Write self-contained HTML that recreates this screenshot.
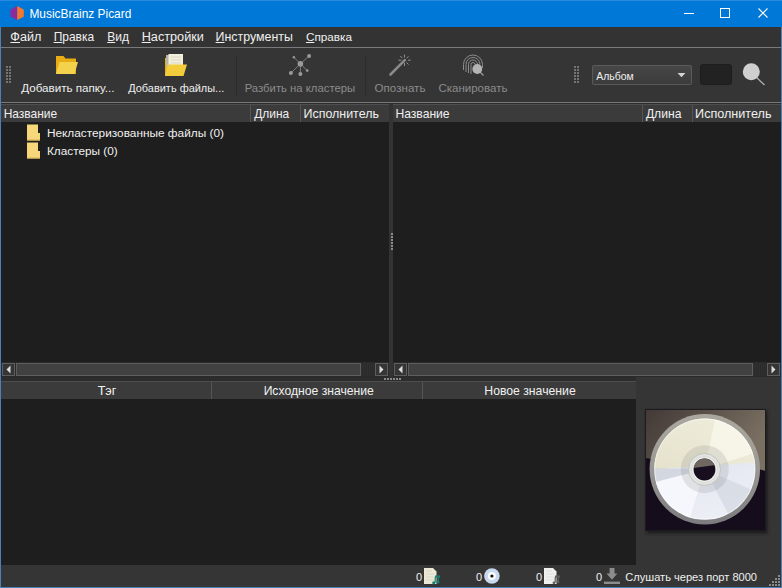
<!DOCTYPE html>
<html><head><meta charset="utf-8">
<style>
*{margin:0;padding:0;box-sizing:border-box}
html,body{width:782px;height:588px;overflow:hidden;background:#0078d7;font-family:"Liberation Sans",sans-serif;font-size:11.5px;color:#f0f0f0}
div,span,svg{position:absolute}
span{white-space:pre;line-height:1}
.u{position:static;text-decoration:underline}
.dis{color:#8c8c8c}
.hd{background:#3b3b3b}
.hl{height:1px;background:#4e4e4e}
.cs{width:1px;background:#555}
.pn{background:#1e1e1e}
.btn{width:13px;height:13px;border:1px solid #5e5e5e;background:#353535}
.hdl{height:13px;border:1px solid #5e5e5e;background:#414141}
</style></head><body>

<div style="left:0;top:0;width:782px;height:27px;background:#0078d7"></div>
<div style="left:0;top:0;width:782px;height:1px;background:#2a8ade"></div>
<div style="left:0;top:27px;width:1px;height:561px;background:#4a82b8"></div>
<div style="left:781px;top:27px;width:1px;height:561px;background:#4a82b8"></div>
<div style="left:0;top:587px;width:782px;height:1px;background:#4a82b8"></div>
<svg style="left:10px;top:5px" width="15" height="16" viewBox="0 0 15 16">
<path d="M7.2 1 L1 4.2 Q0.4 4.5 0.4 5.2 V11 Q0.4 11.6 1 11.9 L7.2 15 Z" fill="#8a2c9c"/><path d="M7.2 1 L13.2 4.2 Q13.8 4.5 13.8 5.2 V11 Q13.8 11.6 13.2 11.9 L7.2 15 Z" fill="#f27830"/></svg>
<span style="left:29.45px;top:9px;font-size:11.91px;color:#fff;">MusicBrainz Picard</span>
<div style="left:684px;top:13px;width:10px;height:1px;background:#fff"></div>
<div style="left:720px;top:8px;width:10px;height:10px;border:1px solid #fff"></div>
<svg style="left:758px;top:8px" width="10" height="10" viewBox="0 0 10 10"><path d="M0.5 0.5 L9.5 9.5 M9.5 0.5 L0.5 9.5" stroke="#fff" stroke-width="1.1"/></svg>
<div style="left:1px;top:27px;width:780px;height:20px;background:#333"></div>
<span style="left:10.37px;top:31px;font-size:12.62px"><span class="u">Ф</span>айл</span>
<span style="left:53.64px;top:31px;font-size:11.99px"><span class="u">П</span>равка</span>
<span style="left:107.24px;top:31px;font-size:12.01px"><span class="u">В</span>ид</span>
<span style="left:141.69px;top:31px;font-size:12.68px"><span class="u">Н</span>астройки</span>
<span style="left:215.61px;top:31px;font-size:12.39px"><span class="u">И</span>нструменты</span>
<span style="left:305.91px;top:31px;font-size:11.74px"><span class="u">С</span>правка</span>
<div style="left:1px;top:47px;width:780px;height:1px;background:#7a7a7a"></div>
<div style="left:1px;top:48px;width:780px;height:54px;background:#353535"></div>
<svg style="left:6px;top:66px" width="6" height="18" viewBox="0 0 6 18" fill="#747474"><rect x="0" y="0" width="2" height="2"/><rect x="3" y="0" width="2" height="2"/><rect x="0" y="3" width="2" height="2"/><rect x="3" y="3" width="2" height="2"/><rect x="0" y="6" width="2" height="2"/><rect x="3" y="6" width="2" height="2"/><rect x="0" y="9" width="2" height="2"/><rect x="3" y="9" width="2" height="2"/><rect x="0" y="12" width="2" height="2"/><rect x="3" y="12" width="2" height="2"/><rect x="0" y="15" width="2" height="2"/><rect x="3" y="15" width="2" height="2"/></svg>
<svg style="left:55px;top:55px" width="24" height="20" viewBox="0 0 24 20">
<path d="M1 1 H8.5 L10.5 3.5 H21 V19 H1 Z" fill="#e9ad14"/><path d="M4.5 7 H23 L19.5 19 H1 Z" fill="#f5d24c"/></svg>
<span style="left:21.2px;top:82px;font-size:11.63px;">Добавить папку...</span>
<svg style="left:164px;top:53px" width="24" height="24" viewBox="0 0 24 24">
<path d="M1 5 H4 V23 H1 Z" fill="#e6b020"/><path d="M2 2 H5 V14 H2 Z" fill="#b8b3a0"/>
<path d="M4.5 1 H19 V14 H4.5 Z" fill="#f2eedc"/><path d="M7 4 H17 M7 7 H17 M7 10 H17" stroke="#d8d2bc" stroke-width="0.8"/>
<path d="M3.5 11.5 H23 L19.5 23 H1 Z" fill="#f2cc3a"/></svg>
<span style="left:128.2px;top:83px;font-size:10.96px;">Добавить файлы...</span>
<div style="left:236px;top:56px;width:1px;height:40px;background:#2c2c2c"></div>
<svg style="left:287px;top:51px" width="26" height="26" viewBox="287 51 26 26">
<g stroke="#858585" stroke-width="0.9"><line x1="300.4" y1="63.8" x2="293.9" y2="57.3"/><line x1="300.4" y1="63.8" x2="309.1" y2="55.9"/>
<line x1="300.4" y1="63.8" x2="290.9" y2="73"/><line x1="300.4" y1="63.8" x2="300.4" y2="73.9"/><line x1="300.4" y1="63.8" x2="307.2" y2="70.6"/></g>
<g fill="#9a9a9a"><circle cx="300.4" cy="63.8" r="2.8"/><circle cx="293.9" cy="57.3" r="1.2"/><circle cx="309.1" cy="55.9" r="2"/>
<circle cx="290.9" cy="73" r="2"/><circle cx="300.4" cy="73.9" r="2"/><circle cx="307.2" cy="70.6" r="1.3"/></g></svg>
<span style="left:244.69px;top:83px;font-size:11.32px;color:#8c8c8c;">Разбить на кластеры</span>
<div style="left:365px;top:56px;width:1px;height:40px;background:#2c2c2c"></div>
<svg style="left:385px;top:48px" width="30" height="30" viewBox="385 48 30 30">
<line x1="390.5" y1="74.5" x2="404.8" y2="60.2" stroke="#8a8a8a" stroke-width="2.6" stroke-linecap="round"/>
<g stroke="#8f8f8f" stroke-width="1"><line x1="404.5" y1="54.5" x2="404.5" y2="57.5"/><line x1="404.5" y1="63" x2="404.5" y2="66"/>
<line x1="398.3" y1="60.2" x2="401.3" y2="60.2"/><line x1="407.9" y1="60.2" x2="410.8" y2="60.2"/>
<line x1="400.3" y1="56" x2="402.3" y2="58"/><line x1="406.5" y1="58.3" x2="408.5" y2="56.3"/><line x1="406.5" y1="62.5" x2="408.5" y2="64.5"/></g></svg>
<span style="left:374.54px;top:82px;font-size:11.61px;color:#8c8c8c;">Опознать</span>
<svg style="left:460px;top:52px" width="28" height="26" viewBox="460 52 28 26">
<g fill="none" stroke="#8c8c8c" stroke-width="1"><path d="M463.5 70 V64.5 A9.5 9.5 0 0 1 482.5 64.5 V68"/>
<path d="M466 72 V64.5 A7 7 0 0 1 480 64.5"/><path d="M468.5 73 V64.5 A4.5 4.5 0 0 1 477.5 64.5"/><path d="M471 74 V64.5 A2 2 0 0 1 475 64.5"/></g>
<line x1="478" y1="70" x2="483.5" y2="75.5" stroke="#9a9a9a" stroke-width="1.3"/><circle cx="477.3" cy="69" r="4.9" fill="#b4b4b4"/></svg>
<span style="left:438.42px;top:83px;font-size:11.52px;color:#8c8c8c;">Сканировать</span>
<svg style="left:574px;top:66px" width="6" height="18" viewBox="0 0 6 18" fill="#747474"><rect x="0" y="0" width="2" height="2"/><rect x="3" y="0" width="2" height="2"/><rect x="0" y="3" width="2" height="2"/><rect x="3" y="3" width="2" height="2"/><rect x="0" y="6" width="2" height="2"/><rect x="3" y="6" width="2" height="2"/><rect x="0" y="9" width="2" height="2"/><rect x="3" y="9" width="2" height="2"/><rect x="0" y="12" width="2" height="2"/><rect x="3" y="12" width="2" height="2"/><rect x="0" y="15" width="2" height="2"/><rect x="3" y="15" width="2" height="2"/></svg>
<div style="left:592px;top:65px;width:100px;height:20px;border:1px solid #5a5a5a;border-radius:2px;background:linear-gradient(#474747,#3b3b3b)"></div>
<span style="left:596.2px;top:72px;font-size:10.45px;">Альбом</span>
<svg style="left:677px;top:72px" width="9" height="6" viewBox="0 0 9 6"><path d="M0.6 1 H8.4 L4.5 5.2 Z" fill="#d4d4d4"/></svg>
<div style="left:700px;top:64px;width:32px;height:21px;border-radius:3px;background:#222;border:1px solid #1d1d1d"></div>
<svg style="left:740px;top:60px" width="28" height="28" viewBox="740 60 28 28">
<line x1="755" y1="76" x2="764.5" y2="85" stroke="#b0b0b0" stroke-width="1.3"/><circle cx="751.3" cy="71.7" r="8.5" fill="#cfcfcf"/></svg>
<div style="left:1px;top:102px;width:780px;height:1px;background:#787878"></div>
<div style="left:1px;top:103px;width:780px;height:462px;background:#2c2c2c"></div>
<div class="pn" style="left:1px;top:104px;width:388px;height:258px"></div>
<div class="hd" style="left:1px;top:104px;width:388px;height:18px"></div>
<div class="hl" style="left:1px;top:104px;width:388px"></div>
<div class="cs" style="left:250px;top:105px;height:17px"></div>
<div class="cs" style="left:300px;top:105px;height:17px"></div>
<div style="left:1px;top:362px;width:388px;height:15px;background:#2a2a2a"></div>
<div class="btn" style="left:2px;top:363px"></div>
<svg style="left:6px;top:365px" width="5" height="9" viewBox="0 0 5 9"><path d="M4.5 0.5 V8.5 L0.5 4.5 Z" fill="#dcdcdc"/></svg>
<div style="left:361px;top:363px;width:13px;height:13px;background:repeating-linear-gradient(90deg,#303030 0 1px,#2b2b2b 1px 2px)"></div>
<div class="btn" style="left:375px;top:363px"></div>
<svg style="left:379px;top:365px" width="5" height="9" viewBox="0 0 5 9"><path d="M0.5 0.5 V8.5 L4.5 4.5 Z" fill="#dcdcdc"/></svg>
<div class="hdl" style="left:16px;top:363px;width:345px"></div>
<div class="pn" style="left:393px;top:104px;width:388px;height:258px"></div>
<div class="hd" style="left:393px;top:104px;width:388px;height:18px"></div>
<div class="hl" style="left:393px;top:104px;width:388px"></div>
<div class="cs" style="left:642px;top:105px;height:17px"></div>
<div class="cs" style="left:692px;top:105px;height:17px"></div>
<div style="left:393px;top:362px;width:388px;height:15px;background:#2a2a2a"></div>
<div class="btn" style="left:394px;top:363px"></div>
<svg style="left:398px;top:365px" width="5" height="9" viewBox="0 0 5 9"><path d="M4.5 0.5 V8.5 L0.5 4.5 Z" fill="#dcdcdc"/></svg>
<div style="left:753px;top:363px;width:13px;height:13px;background:repeating-linear-gradient(90deg,#303030 0 1px,#2b2b2b 1px 2px)"></div>
<div class="btn" style="left:767px;top:363px"></div>
<svg style="left:771px;top:365px" width="5" height="9" viewBox="0 0 5 9"><path d="M0.5 0.5 V8.5 L4.5 4.5 Z" fill="#dcdcdc"/></svg>
<div class="hdl" style="left:408px;top:363px;width:345px"></div>
<span style="left:3.64px;top:108px;font-size:11.99px;">Название</span>
<span style="left:254.2px;top:109px;font-size:11.94px;">Длина</span>
<span style="left:303.51px;top:108px;font-size:12.44px;">Исполнитель</span>
<span style="left:395.43px;top:108px;font-size:12.13px;">Название</span>
<span style="left:645.9px;top:108px;font-size:12.14px;">Длина</span>
<span style="left:695.09px;top:108px;font-size:12.61px;">Исполнитель</span>
<svg style="left:26px;top:124px" width="15" height="17" viewBox="0 0 15 17">
<path d="M1 0.5 H12 V9 H14 V16.5 H1 Z" fill="#f6d77a"/><path d="M1 15.5 H14 V16.5 H1 Z" fill="#d8b050"/></svg>
<svg style="left:26px;top:142px" width="15" height="17" viewBox="0 0 15 17">
<path d="M1 0.5 H12 V9 H14 V16.5 H1 Z" fill="#f6d77a"/><path d="M1 15.5 H14 V16.5 H1 Z" fill="#d8b050"/></svg>
<span style="left:46.95px;top:128px;font-size:11.84px;">Некластеризованные файлы (0)</span>
<span style="left:46.96px;top:146px;font-size:11.81px;">Кластеры (0)</span>
<div style="left:389px;top:104px;width:4px;height:273px;background:#333"></div>
<svg style="left:391px;top:233px" width="2" height="18" viewBox="0 0 2 18" fill="#8a8a8a"><rect x="0" y="0" width="2" height="2"/><rect x="0" y="3" width="2" height="2"/><rect x="0" y="6" width="2" height="2"/><rect x="0" y="9" width="2" height="2"/><rect x="0" y="12" width="2" height="2"/><rect x="0" y="15" width="2" height="2"/></svg>
<svg style="left:384px;top:378px" width="18" height="2" viewBox="0 0 18 2" fill="#8a8a8a"><rect x="0" y="0" width="2" height="2"/><rect x="3" y="0" width="2" height="2"/><rect x="6" y="0" width="2" height="2"/><rect x="9" y="0" width="2" height="2"/><rect x="12" y="0" width="2" height="2"/><rect x="15" y="0" width="2" height="2"/></svg>
<div class="pn" style="left:1px;top:381px;width:635px;height:184px"></div>
<div class="hd" style="left:1px;top:381px;width:635px;height:18px"></div>
<div class="hl" style="left:1px;top:381px;width:635px"></div>
<div class="cs" style="left:211px;top:382px;height:17px"></div>
<div class="cs" style="left:422px;top:382px;height:17px"></div>
<span style="left:97.65px;top:385px;font-size:12.63px;">Тэг</span>
<span style="left:263.63px;top:385px;font-size:12.18px;">Исходное значение</span>
<span style="left:484.32px;top:385px;font-size:12.23px;">Новое значение</span>
<div style="left:636px;top:377px;width:145px;height:188px;background:#353535"></div>
<svg style="left:636px;top:400px" width="145" height="145" viewBox="636 400 145 145">
<defs>
<filter id="sh" x="-10%" y="-10%" width="130%" height="130%"><feGaussianBlur stdDeviation="1.6"/></filter>
<linearGradient id="bgb" x1="0" y1="0" x2="1" y2="0.4"><stop offset="0" stop-color="#423836"/><stop offset="1" stop-color="#7a7062"/></linearGradient>
<linearGradient id="ring" x1="0" y1="0" x2="0" y2="1"><stop offset="0" stop-color="#aaa79e"/><stop offset="0.45" stop-color="#9c9a94"/><stop offset="1" stop-color="#7c7c7e"/></linearGradient>
<linearGradient id="up" x1="0" y1="1" x2="1" y2="0"><stop offset="0" stop-color="#e4e0ca"/><stop offset="1" stop-color="#f4f2e2"/></linearGradient>
<linearGradient id="lo" x1="0" y1="0" x2="0.3" y2="1"><stop offset="0" stop-color="#d6dce8"/><stop offset="1" stop-color="#eef0f6"/></linearGradient>
<clipPath id="face"><circle cx="704.8" cy="469.2" r="50.6"/></clipPath>
<clipPath id="hole"><circle cx="704.5" cy="469.5" r="10.9"/></clipPath>
</defs>
<rect x="646.5" y="410.5" width="121" height="123" fill="#141414" opacity="0.9" filter="url(#sh)"/>
<rect x="645" y="409" width="121" height="122" fill="#150d1c"/>
<path d="M645 409 H766 V471 Q735 462 705 462 T645 458 Z" fill="url(#bgb)"/>
<rect x="645.5" y="409.5" width="120" height="121" fill="none" stroke="#1e1a20" stroke-width="1"/>
<circle cx="704.8" cy="469.2" r="55.2" fill="url(#ring)"/>
<g clip-path="url(#face)">
  <rect x="640" y="400" width="130" height="140" fill="url(#lo)"/>
  <polygon points="640,400 770,400 770,461.5 640,470" fill="url(#up)"/>
  <polygon points="704.8,469.2 718,405 770,405 770,448" fill="#faf8ec" opacity="0.75"/>
  <polygon points="704.8,469.2 640,486 640,540 683,540" fill="#f8f9fe" opacity="0.85"/>
  <polygon points="704.8,469.2 640,468 640,486" fill="#c4c8d2" opacity="0.5"/>
  <polygon points="704.8,469.2 742,540 770,540 770,498" fill="#c6ccd8" opacity="0.45"/>
  <circle cx="704.8" cy="469.2" r="24" fill="#707070" opacity="0.16"/>
  <circle cx="704.8" cy="469.2" r="50" fill="none" stroke="#ffffff" stroke-width="1.2" opacity="0.45"/>
</g>
<circle cx="704.5" cy="469.5" r="16" fill="#e2e4e2" stroke="#bcbcb8" stroke-width="0.8"/>
<circle cx="704.5" cy="469.5" r="13" fill="#eeeeec" stroke="#cfcfcb" stroke-width="0.6"/>
<circle cx="704.5" cy="469.5" r="10.9" fill="#170f1e"/>
<g clip-path="url(#hole)"><polygon points="690,455 720,455 720,464.5 690,468.5" fill="#706860"/></g>
</svg>

<div style="left:1px;top:565px;width:780px;height:22px;background:#353535"></div>
<span style="left:415.92999999999995px;top:572.03px;font-size:11px">0</span>
<span style="left:476.03px;top:572.03px;font-size:11px">0</span>
<span style="left:535.93px;top:572.03px;font-size:11px">0</span>
<span style="left:596.03px;top:572.04px;font-size:11px">0</span>
<span style="left:625.25px;top:572px;font-size:11.08px;">Слушать через порт 8000</span>
<svg style="left:420px;top:565px" width="210" height="21" viewBox="420 565 210 21">
<path d="M424 568 H433 L436.5 571.5 V584 H424 Z" fill="#ece8d6"/>
<path d="M426 571 H432 M426 574 H434 M426 577 H434 M426 580 H434" stroke="#d6d0bc" stroke-width="0.7"/>
<g fill="#16806e"><rect x="435" y="575.5" width="5" height="2"/><rect x="437.6" y="576" width="1.4" height="6"/><circle cx="438" cy="582" r="1.6"/><circle cx="433.8" cy="582.8" r="1.6"/><rect x="434.6" y="577" width="1.2" height="5.5"/></g>
<circle cx="491.9" cy="576" r="7.8" fill="#c8d8ee"/>
<circle cx="491.9" cy="576" r="4" fill="#fafcff"/>
<circle cx="491.9" cy="576" r="1.6" fill="#101010"/>
<path d="M544 568 H553 L556.5 571.5 V584 H544 Z" fill="#f0f0ee"/>
<path d="M546 571 H552 M546 574 H554 M546 577 H554 M546 580 H554" stroke="#d8d8d8" stroke-width="0.7"/>
<g fill="#5c5c5c"><rect x="555" y="575.5" width="5" height="2"/><rect x="557.6" y="576" width="1.4" height="6"/><circle cx="558" cy="582" r="1.4"/><rect x="554.6" y="577" width="1.2" height="5.5"/><circle cx="554" cy="582.8" r="1.4"/></g>
<path d="M609.6 568 H614.5 V573.4 H617.3 L612 579.7 L606.5 573.4 H609.6 Z" fill="#8c8c8c"/>
<rect x="604" y="581.6" width="16" height="2.4" fill="#8c8c8c"/>
</svg>
<svg style="left:768px;top:574px" width="13" height="12" viewBox="768 574 13 12" fill="#8a8a8a">
<rect x="778" y="575" width="2" height="2"/>
<rect x="775" y="578" width="2" height="2"/><rect x="778" y="578" width="2" height="2"/>
<rect x="772" y="581" width="2" height="2"/><rect x="775" y="581" width="2" height="2"/><rect x="778" y="581" width="2" height="2"/>
<rect x="769" y="584" width="2" height="2"/><rect x="772" y="584" width="2" height="2"/><rect x="775" y="584" width="2" height="2"/><rect x="778" y="584" width="2" height="2"/>
</svg>

</body></html>
